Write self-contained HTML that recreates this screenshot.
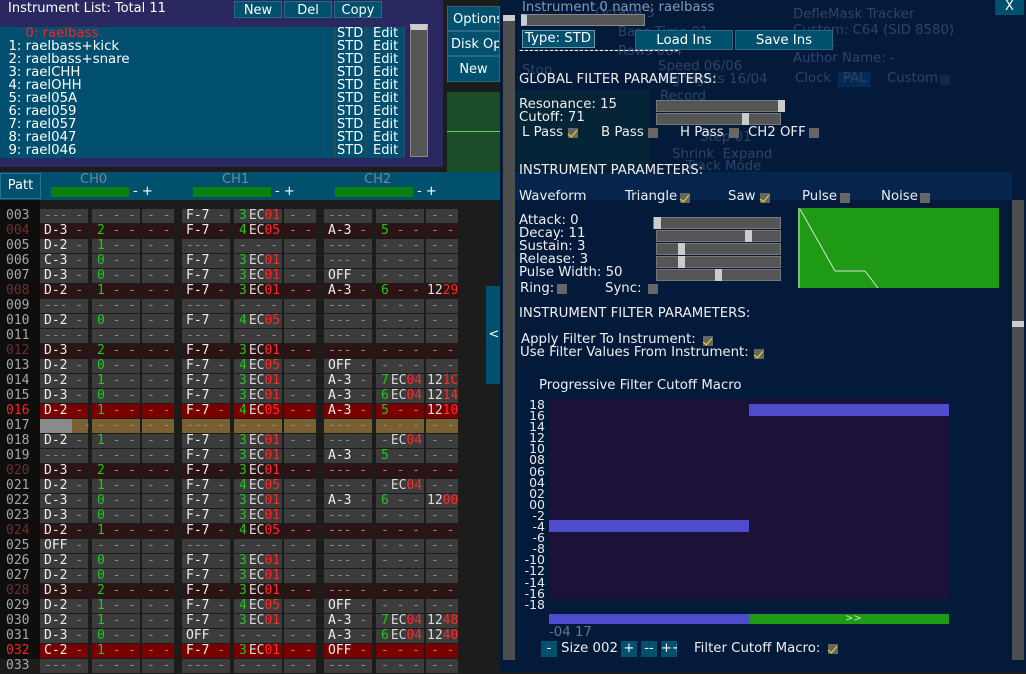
<!DOCTYPE html><html><head><meta charset="utf-8"><style>
*{margin:0;padding:0;box-sizing:border-box}
body{width:1026px;height:672px;overflow:hidden;background:#1c1c1c;position:relative;font-family:"DejaVu Sans","Liberation Sans",sans-serif;font-size:12px;color:#e8e8e8}
.a{position:absolute;white-space:pre}
.btn{position:absolute;background:#00506e;color:#fff;text-align:center;font-size:13px;line-height:17px;border:1px solid #2a6a85;white-space:nowrap;overflow:hidden}
.r{position:absolute;left:0;height:14px;display:flex;font-family:"DejaVu Sans Mono",monospace;font-size:13px;line-height:14px;white-space:pre}
.r b{width:40px;font-weight:normal;color:#a8a8a8;padding-left:6px;background:#0e0e0e;height:15px}
.r i{font-style:normal;width:48px;margin-left:4px;background:#3c3c3c;color:#eee;padding-left:4px}
.r i:nth-of-type(3n+1){margin-left:8px}
.r i:nth-of-type(1){margin-left:0}
.r i:nth-of-type(3n){width:32px;margin-left:2px;padding-left:5px}
.r i:nth-of-type(3n+2){padding-left:5px}
.h i{background:#2c1414}.h b{color:#6e2e2e}
.c i{background:#7a0000}.c b{color:#ff2020}
.o i{background:#7a6030}
d{color:#8a8a8a}g{color:#1ec81e}e{color:#d8d8d8;margin-left:2px}r{color:#ff2a2a}
.fx{margin-left:-4px;color:#ddd}
.cb{position:absolute;width:10px;height:10px;background:#666}
.cb.k::after{content:"";position:absolute;left:2px;top:0;width:4px;height:8px;border:solid #ffe600;border-width:0 1.5px 1.5px 0;transform:rotate(40deg)}
.sl{position:absolute;height:12px;background:#555;border:1px solid #777}
.sl span{position:absolute;top:-1px;width:7px;height:12px;background:#ccc}
.f{position:absolute;white-space:pre;color:#2c4468;font-size:13.3px}
.w{position:absolute;white-space:pre;font-size:13.3px;color:#eee}
.yl{position:absolute;left:512px;width:33px;text-align:right;font-size:12.5px;line-height:11.1px;white-space:pre}
</style></head><body>
<!-- instrument list -->
<div class="a" style="left:0;top:0;width:443px;height:167px;background:#2a2860"></div>
<div class="a" style="left:8px;top:1px;font-size:13px;color:#fff">Instrument List: Total 11</div>
<div class="btn" style="left:234px;top:1px;width:48px;height:17px">New</div>
<div class="btn" style="left:284px;top:1px;width:48px;height:17px">Del</div>
<div class="btn" style="left:334px;top:1px;width:48px;height:17px">Copy</div>
<div class="a" style="left:0;top:27px;width:405px;height:131px;background:#004f70"></div>
<div class="a" style="left:333px;top:27px;width:3px;height:131px;background:#2a4a5a"></div>
<div class="a" style="left:365px;top:27px;width:2px;height:131px;background:#2a4a5a"></div>
<div class="a" style="left:403px;top:27px;width:2px;height:131px;background:#2a4a5a"></div>
<div class="a" style="left:0;top:27px;font-size:13.3px;line-height:13px;color:#fff">      <span style="color:#ff2020">0: raelbass</span>
  1: raelbass+kick
  2: raelbass+snare
  3: raelCHH
  4: raelOHH
  5: rael05A
  6: rael059
  7: rael057
  8: rael047
  9: rael046</div>
<div class="a" style="left:337px;top:27px;font-size:13px;line-height:13px;color:#fff">STD
STD
STD
STD
STD
STD
STD
STD
STD
STD</div>
<div class="a" style="left:373px;top:27px;font-size:13px;line-height:13px;color:#fff">Edit
Edit
Edit
Edit
Edit
Edit
Edit
Edit
Edit
Edit</div>
<div class="a" style="left:410px;top:24px;width:18px;height:133px;background:#555;border:1px solid #888;border-top:6px solid #ccc"></div>
<div class="a" style="left:443px;top:0;width:57px;height:172px;background:#1c1c1c"></div>
<div class="btn" style="left:447px;top:6px;width:53px;height:25px;line-height:25px;text-align:left;padding-left:5px">Options</div>
<div class="btn" style="left:447px;top:31px;width:53px;height:25px;line-height:25px;text-align:left;padding-left:3px">Disk Op.</div>
<div class="btn" style="left:447px;top:56px;width:53px;height:26px;line-height:26px">New</div>
<div class="a" style="left:447px;top:92px;width:53px;height:80px;background:#1a4d28"></div>
<div class="a" style="left:447px;top:131px;width:53px;height:1px;background:#6ac86a"></div>
<!-- channel header -->
<div class="a" style="left:0;top:172px;width:500px;height:28px;background:#00506e"></div>
<div class="btn" style="left:0;top:173px;width:41px;height:26px;line-height:24px;border-color:#2a7090">Patt</div>
<div class="a" style="left:80px;top:172px;font-size:13px;color:#6b8a9a">CH0</div>
<div class="a" style="left:222px;top:172px;font-size:13px;color:#6b8a9a">CH1</div>
<div class="a" style="left:364px;top:172px;font-size:13px;color:#6b8a9a">CH2</div>
<div class="a" style="left:51px;top:187px;width:78px;height:10px;background:#0a8010"></div>
<div class="a" style="left:193px;top:187px;width:78px;height:10px;background:#0a8010"></div>
<div class="a" style="left:335px;top:187px;width:78px;height:10px;background:#0a8010"></div>
<div class="a" style="left:133px;top:184px;font-size:13px;color:#fff">- +</div>
<div class="a" style="left:275px;top:184px;font-size:13px;color:#fff">- +</div>
<div class="a" style="left:417px;top:184px;font-size:13px;color:#fff">- +</div>
<div class="a" style="left:0;top:200px;width:40px;height:472px;background:#0e0e0e"></div>
<div class="btn" style="left:486px;top:286px;width:16px;height:98px;line-height:98px;border:none">&lt;</div>
<!-- rows -->
<div class="r" style="top:209px"><b>003</b><i><d>--- -</d></i><i><d>- - -</d></i><i><d>- -</d></i><i>F-7 <d>-</d></i><i><g>3</g><e>EC</e><r>01</r></i><i><d>- -</d></i><i><d>--- -</d></i><i><d>- - -</d></i><i><d>- -</d></i></div>
<div class="r h" style="top:224px"><b>004</b><i>D-3 <d>-</d></i><i><g>2</g><d> - -</d></i><i><d>- -</d></i><i>F-7 <d>-</d></i><i><g>4</g><e>EC</e><r>05</r></i><i><d>- -</d></i><i>A-3 <d>-</d></i><i><g>5</g><d> - -</d></i><i><d>- -</d></i></div>
<div class="r" style="top:239px"><b>005</b><i>D-2 <d>-</d></i><i><g>1</g><d> - -</d></i><i><d>- -</d></i><i><d>--- -</d></i><i><d>- - -</d></i><i><d>- -</d></i><i><d>--- -</d></i><i><d>- - -</d></i><i><d>- -</d></i></div>
<div class="r" style="top:254px"><b>006</b><i>C-3 <d>-</d></i><i><g>0</g><d> - -</d></i><i><d>- -</d></i><i>F-7 <d>-</d></i><i><g>3</g><e>EC</e><r>01</r></i><i><d>- -</d></i><i><d>--- -</d></i><i><d>- - -</d></i><i><d>- -</d></i></div>
<div class="r" style="top:269px"><b>007</b><i>D-3 <d>-</d></i><i><g>0</g><d> - -</d></i><i><d>- -</d></i><i>F-7 <d>-</d></i><i><g>3</g><e>EC</e><r>01</r></i><i><d>- -</d></i><i>OFF <d>-</d></i><i><d>- - -</d></i><i><d>- -</d></i></div>
<div class="r h" style="top:284px"><b>008</b><i>D-2 <d>-</d></i><i><g>1</g><d> - -</d></i><i><d>- -</d></i><i>F-7 <d>-</d></i><i><g>3</g><e>EC</e><r>01</r></i><i><d>- -</d></i><i>A-3 <d>-</d></i><i><g>6</g><d> - -</d></i><i><span class="fx">12<r>29</r></span></i></div>
<div class="r" style="top:299px"><b>009</b><i><d>--- -</d></i><i><d>- - -</d></i><i><d>- -</d></i><i><d>--- -</d></i><i><d>- - -</d></i><i><d>- -</d></i><i><d>--- -</d></i><i><d>- - -</d></i><i><d>- -</d></i></div>
<div class="r" style="top:314px"><b>010</b><i>D-2 <d>-</d></i><i><g>0</g><d> - -</d></i><i><d>- -</d></i><i>F-7 <d>-</d></i><i><g>4</g><e>EC</e><r>05</r></i><i><d>- -</d></i><i><d>--- -</d></i><i><d>- - -</d></i><i><d>- -</d></i></div>
<div class="r" style="top:329px"><b>011</b><i><d>--- -</d></i><i><d>- - -</d></i><i><d>- -</d></i><i><d>--- -</d></i><i><d>- - -</d></i><i><d>- -</d></i><i><d>--- -</d></i><i><d>- - -</d></i><i><d>- -</d></i></div>
<div class="r h" style="top:344px"><b>012</b><i>D-3 <d>-</d></i><i><g>2</g><d> - -</d></i><i><d>- -</d></i><i>F-7 <d>-</d></i><i><g>3</g><e>EC</e><r>01</r></i><i><d>- -</d></i><i><d>--- -</d></i><i><d>- - -</d></i><i><d>- -</d></i></div>
<div class="r" style="top:359px"><b>013</b><i>D-2 <d>-</d></i><i><g>0</g><d> - -</d></i><i><d>- -</d></i><i>F-7 <d>-</d></i><i><g>4</g><e>EC</e><r>05</r></i><i><d>- -</d></i><i>OFF <d>-</d></i><i><d>- - -</d></i><i><d>- -</d></i></div>
<div class="r" style="top:374px"><b>014</b><i>D-2 <d>-</d></i><i><g>1</g><d> - -</d></i><i><d>- -</d></i><i>F-7 <d>-</d></i><i><g>3</g><e>EC</e><r>01</r></i><i><d>- -</d></i><i>A-3 <d>-</d></i><i><g>7</g><e>EC</e><r>04</r></i><i><span class="fx">12<r>1C</r></span></i></div>
<div class="r" style="top:389px"><b>015</b><i>D-3 <d>-</d></i><i><g>0</g><d> - -</d></i><i><d>- -</d></i><i>F-7 <d>-</d></i><i><g>3</g><e>EC</e><r>01</r></i><i><d>- -</d></i><i>A-3 <d>-</d></i><i><g>6</g><e>EC</e><r>04</r></i><i><span class="fx">12<r>14</r></span></i></div>
<div class="r c" style="top:404px"><b>016</b><i>D-2 <d>-</d></i><i><g>1</g><d> - -</d></i><i><d>- -</d></i><i>F-7 <d>-</d></i><i><g>4</g><e>EC</e><r>05</r></i><i><d>- -</d></i><i>A-3 <d>-</d></i><i><g>5</g><d> - -</d></i><i><span class="fx">12<r>10</r></span></i></div>
<div class="r o" style="top:419px"><b>017</b><i style="background:linear-gradient(90deg,#8a8a8a 32px,#7a6030 32px)"><d>     -</d></i><i><d>- - -</d></i><i><d>- -</d></i><i><d>--- -</d></i><i><d>- - -</d></i><i><d>- -</d></i><i><d>--- -</d></i><i><d>- - -</d></i><i><d>- -</d></i></div>
<div class="r" style="top:434px"><b>018</b><i>D-2 <d>-</d></i><i><g>1</g><d> - -</d></i><i><d>- -</d></i><i>F-7 <d>-</d></i><i><g>3</g><e>EC</e><r>01</r></i><i><d>- -</d></i><i><d>--- -</d></i><i><d>-</d><e>EC</e><r>04</r></i><i><d>- -</d></i></div>
<div class="r" style="top:449px"><b>019</b><i><d>--- -</d></i><i><d>- - -</d></i><i><d>- -</d></i><i>F-7 <d>-</d></i><i><g>3</g><e>EC</e><r>01</r></i><i><d>- -</d></i><i>A-3 <d>-</d></i><i><g>5</g><d> - -</d></i><i><d>- -</d></i></div>
<div class="r h" style="top:464px"><b>020</b><i>D-3 <d>-</d></i><i><g>2</g><d> - -</d></i><i><d>- -</d></i><i>F-7 <d>-</d></i><i><g>3</g><e>EC</e><r>01</r></i><i><d>- -</d></i><i><d>--- -</d></i><i><d>- - -</d></i><i><d>- -</d></i></div>
<div class="r" style="top:479px"><b>021</b><i>D-2 <d>-</d></i><i><g>1</g><d> - -</d></i><i><d>- -</d></i><i>F-7 <d>-</d></i><i><g>4</g><e>EC</e><r>05</r></i><i><d>- -</d></i><i><d>--- -</d></i><i><d>-</d><e>EC</e><r>04</r></i><i><d>- -</d></i></div>
<div class="r" style="top:494px"><b>022</b><i>C-3 <d>-</d></i><i><g>0</g><d> - -</d></i><i><d>- -</d></i><i>F-7 <d>-</d></i><i><g>3</g><e>EC</e><r>01</r></i><i><d>- -</d></i><i>A-3 <d>-</d></i><i><g>6</g><d> - -</d></i><i><span class="fx">12<r>00</r></span></i></div>
<div class="r" style="top:509px"><b>023</b><i>D-3 <d>-</d></i><i><g>0</g><d> - -</d></i><i><d>- -</d></i><i>F-7 <d>-</d></i><i><g>3</g><e>EC</e><r>01</r></i><i><d>- -</d></i><i><d>--- -</d></i><i><d>- - -</d></i><i><d>- -</d></i></div>
<div class="r h" style="top:524px"><b>024</b><i>D-2 <d>-</d></i><i><g>1</g><d> - -</d></i><i><d>- -</d></i><i>F-7 <d>-</d></i><i><g>4</g><e>EC</e><r>05</r></i><i><d>- -</d></i><i><d>--- -</d></i><i><d>- - -</d></i><i><d>- -</d></i></div>
<div class="r" style="top:539px"><b>025</b><i>OFF <d>-</d></i><i><d>- - -</d></i><i><d>- -</d></i><i><d>--- -</d></i><i><d>- - -</d></i><i><d>- -</d></i><i><d>--- -</d></i><i><d>- - -</d></i><i><d>- -</d></i></div>
<div class="r" style="top:554px"><b>026</b><i>D-2 <d>-</d></i><i><g>0</g><d> - -</d></i><i><d>- -</d></i><i>F-7 <d>-</d></i><i><g>3</g><e>EC</e><r>01</r></i><i><d>- -</d></i><i><d>--- -</d></i><i><d>- - -</d></i><i><d>- -</d></i></div>
<div class="r" style="top:569px"><b>027</b><i>D-2 <d>-</d></i><i><g>0</g><d> - -</d></i><i><d>- -</d></i><i>F-7 <d>-</d></i><i><g>3</g><e>EC</e><r>01</r></i><i><d>- -</d></i><i><d>--- -</d></i><i><d>- - -</d></i><i><d>- -</d></i></div>
<div class="r h" style="top:584px"><b>028</b><i>D-3 <d>-</d></i><i><g>2</g><d> - -</d></i><i><d>- -</d></i><i>F-7 <d>-</d></i><i><g>3</g><e>EC</e><r>01</r></i><i><d>- -</d></i><i><d>--- -</d></i><i><d>- - -</d></i><i><d>- -</d></i></div>
<div class="r" style="top:599px"><b>029</b><i>D-2 <d>-</d></i><i><g>1</g><d> - -</d></i><i><d>- -</d></i><i>F-7 <d>-</d></i><i><g>4</g><e>EC</e><r>05</r></i><i><d>- -</d></i><i>OFF <d>-</d></i><i><d>- - -</d></i><i><d>- -</d></i></div>
<div class="r" style="top:614px"><b>030</b><i>D-2 <d>-</d></i><i><g>1</g><d> - -</d></i><i><d>- -</d></i><i>F-7 <d>-</d></i><i><g>3</g><e>EC</e><r>01</r></i><i><d>- -</d></i><i>A-3 <d>-</d></i><i><g>7</g><e>EC</e><r>04</r></i><i><span class="fx">12<r>48</r></span></i></div>
<div class="r" style="top:629px"><b>031</b><i>D-3 <d>-</d></i><i><g>0</g><d> - -</d></i><i><d>- -</d></i><i>OFF <d>-</d></i><i><d>- - -</d></i><i><d>- -</d></i><i>A-3 <d>-</d></i><i><g>6</g><e>EC</e><r>04</r></i><i><span class="fx">12<r>40</r></span></i></div>
<div class="r c" style="top:644px"><b>032</b><i>C-2 <d>-</d></i><i><g>1</g><d> - -</d></i><i><d>- -</d></i><i>F-7 <d>-</d></i><i><g>3</g><e>EC</e><r>01</r></i><i><d>- -</d></i><i>OFF <d>-</d></i><i><d>- - -</d></i><i><d>- -</d></i></div>
<div class="r" style="top:659px"><b style="background:#1c1c1c">033</b><i><d>--- -</d></i><i><d>- - -</d></i><i><d>- -</d></i><i><d>--- -</d></i><i><d>- - -</d></i><i><d>- -</d></i><i><d>--- -</d></i><i><d>- - -</d></i><i><d>- -</d></i></div>

<!-- right panel -->
<div class="a" style="left:500px;top:0;width:526px;height:672px;background:#041a3b"></div>
<div class="a" style="left:515px;top:90px;width:135px;height:80px;background:#062438"></div>
<div class="a" style="left:515px;top:172px;width:497px;height:28px;background:#06254c"></div>
<div class="a" style="left:503px;top:15px;width:12px;height:645px;background:#4e4e4e;border-top:6px solid #ccc"></div>
<div class="a" style="left:1012px;top:200px;width:12px;height:460px;background:#4e4e4e"></div>
<div class="a" style="left:1012px;top:321px;width:12px;height:6px;background:#ccc"></div>
<div class="btn" style="left:995px;top:0;width:29px;height:15px;line-height:14px;border:none">X</div>
<!-- faded underlying text -->
<div class="f" style="left:595px;top:6px">Octave 3</div>
<div class="f" style="left:618px;top:25px">Base Time 01</div>
<div class="f" style="left:618px;top:44px">Rows 064</div>
<div class="f" style="left:658px;top:59px">Speed 06/06</div>
<div class="f" style="left:522px;top:63px">Stop</div>
<div class="f" style="left:658px;top:72px">Highlights 16/04</div>
<div class="f" style="left:660px;top:89px">Record</div>
<div class="f" style="left:700px;top:130px">Step 01</div>
<div class="f" style="left:672px;top:147px">Shrink  Expand</div>
<div class="f" style="left:686px;top:159px">Track Mode</div>
<div class="f" style="left:793px;top:7px">DefleMask Tracker</div>
<div class="f" style="left:793px;top:23px">Custom: C64 (SID 8580)</div>
<div class="f" style="left:793px;top:38px">Title: -</div>
<div class="f" style="left:793px;top:51px">Author Name: -</div>
<div class="f" style="left:795px;top:71px">Clock</div>
<div class="a" style="left:838px;top:72px;width:33px;height:15px;background:#062a55"></div>
<div class="f" style="left:843px;top:71px">PAL</div>
<div class="f" style="left:887px;top:71px">Custom</div>
<div class="a" style="left:940px;top:75px;width:10px;height:10px;background:#0e2a48"></div>
<!-- panel content -->
<div class="w" style="left:522px;top:0;color:#8898b0">Instrument 0 name: raelbass</div>
<div class="a" style="left:521px;top:14px;width:124px;height:12px;background:#555;border:1px solid #888;border-left:6px solid #ccc"></div>
<div class="a" style="left:522px;top:30px;width:73px;height:18px;background:#00506e;border:1px solid #6a9ab0;color:#fff;font-size:13.3px;line-height:16px;padding-left:2px">Type: STD</div>
<div class="btn" style="left:635px;top:30px;width:98px;height:20px;line-height:19px;font-size:13.3px">Load Ins</div>
<div class="btn" style="left:735px;top:30px;width:98px;height:20px;line-height:19px;font-size:13.3px">Save Ins</div>
<div class="w" style="left:519px;top:43px;letter-spacing:0.2px">--------------------------------</div>
<div class="w" style="left:519px;top:72px">GLOBAL FILTER PARAMETERS:</div>
<div class="w" style="left:519px;top:97px">Resonance: 15</div>
<div class="w" style="left:519px;top:110px">Cutoff: 71</div>
<div class="sl" style="left:656px;top:100px;width:129px"><span style="left:121px"></span></div>
<div class="sl" style="left:656px;top:113px;width:125px"><span style="left:85px"></span></div>
<div class="w" style="left:522px;top:125px">L Pass</div><div class="cb k" style="left:568px;top:128px"></div>
<div class="w" style="left:601px;top:125px">B Pass</div><div class="cb" style="left:648px;top:128px"></div>
<div class="w" style="left:680px;top:125px">H Pass</div><div class="cb" style="left:729px;top:128px"></div>
<div class="w" style="left:748px;top:125px">CH2 OFF</div><div class="cb" style="left:809px;top:128px"></div>
<div class="w" style="left:519px;top:163px">INSTRUMENT PARAMETERS:</div>
<div class="w" style="left:519px;top:189px">Waveform</div>
<div class="w" style="left:625px;top:189px">Triangle</div><div class="cb k" style="left:680px;top:193px"></div>
<div class="w" style="left:728px;top:189px">Saw</div><div class="cb k" style="left:760px;top:193px"></div>
<div class="w" style="left:802px;top:189px">Pulse</div><div class="cb" style="left:840px;top:193px"></div>
<div class="w" style="left:881px;top:189px">Noise</div><div class="cb" style="left:920px;top:193px"></div>
<div class="w" style="left:519px;top:214px;line-height:13px">Attack: 0
Decay: 11
Sustain: 3
Release: 3
Pulse Width: 50</div>
<div class="sl" style="left:653px;top:217px;width:128px"><span style="left:0"></span></div>
<div class="sl" style="left:656px;top:230px;width:125px"><span style="left:88px"></span></div>
<div class="sl" style="left:656px;top:243px;width:125px"><span style="left:21px"></span></div>
<div class="sl" style="left:656px;top:256px;width:125px"><span style="left:21px"></span></div>
<div class="sl" style="left:656px;top:269px;width:125px"><span style="left:58px"></span></div>
<div class="w" style="left:520px;top:281px">Ring:</div><div class="cb" style="left:557px;top:284px"></div>
<div class="w" style="left:605px;top:281px">Sync:</div><div class="cb" style="left:648px;top:284px"></div>
<svg class="a" style="left:798px;top:208px" width="201" height="80"><rect width="201" height="80" fill="#1e9a14"/><polyline points="1,0 1,80" stroke="#ddd" fill="none"/><polyline points="2,1 37,63 67,63 80,80" stroke="#ddd" fill="none"/></svg>
<div class="w" style="left:519px;top:306px">INSTRUMENT FILTER PARAMETERS:</div>
<div class="w" style="left:521px;top:332px">Apply Filter To Instrument:</div><div class="cb k" style="left:703px;top:336px"></div>
<div class="w" style="left:520px;top:345px">Use Filter Values From Instrument:</div><div class="cb k" style="left:754px;top:349px"></div>
<div class="w" style="left:539px;top:378px">Progressive Filter Cutoff Macro</div>
<div class="a" style="left:549px;top:399px;width:400px;height:200px;background:#1c1238"></div>
<div class="a" style="left:749px;top:404px;width:200px;height:12px;background:#4c4ccc"></div>
<div class="a" style="left:549px;top:520px;width:200px;height:12px;background:#4c4ccc"></div>
<div class="yl" style="top:399px">18
16
14
12
10
08
06
04
02
00
-2
-4
-6
-8
-10
-12
-14
-16
-18</div>
<div class="a" style="left:549px;top:614px;width:200px;height:10px;background:#4c4ccc"></div>
<div class="a" style="left:749px;top:614px;width:200px;height:10px;background:#1e9a14;color:#ddd;font-size:10px;line-height:10px;padding-left:96px">&gt;&gt;</div>
<div class="w" style="left:549px;top:625px;color:#6a7488">-04 17</div>
<div class="btn" style="left:541px;top:641px;width:16px;height:16px;line-height:15px;border:none">-</div>
<div class="w" style="left:561px;top:641px">Size 002</div>
<div class="btn" style="left:621px;top:641px;width:16px;height:16px;line-height:15px;border:none">+</div>
<div class="btn" style="left:641px;top:641px;width:16px;height:16px;line-height:15px;border:none">--</div>
<div class="btn" style="left:661px;top:641px;width:16px;height:16px;line-height:15px;border:none">++</div>
<div class="w" style="left:694px;top:641px">Filter Cutoff Macro:</div><div class="cb k" style="left:828px;top:644px"></div>
</body></html>
